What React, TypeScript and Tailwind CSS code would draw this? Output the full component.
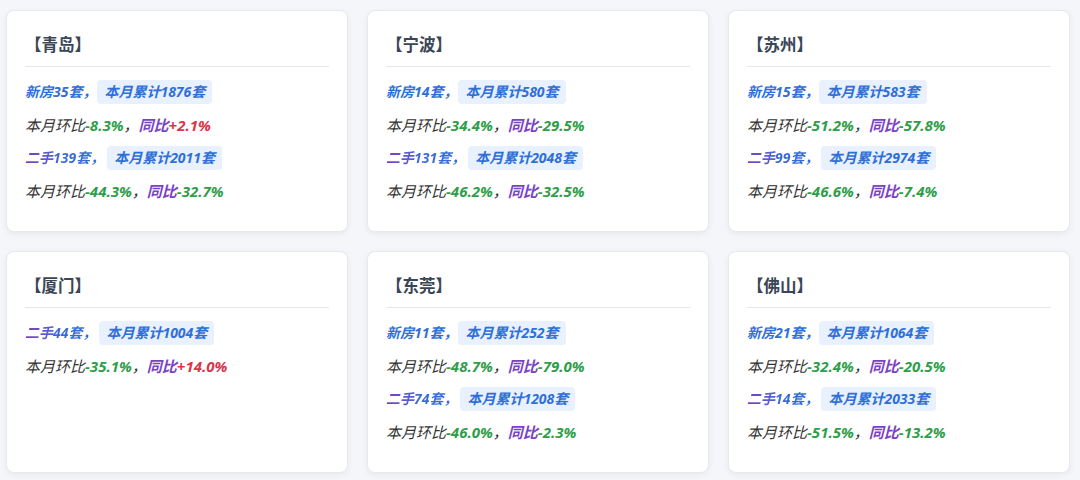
import React from 'react';

type Line = { kind: 'new' | 'second'; count: number; total: number; mom: string; yoy: string };
type City = { name: string; lines: Line[] };

const cities: City[] = [
  {
    name: '青岛',
    lines: [
      { kind: 'new', count: 35, total: 1876, mom: '-8.3%', yoy: '+2.1%' },
      { kind: 'second', count: 139, total: 2011, mom: '-44.3%', yoy: '-32.7%' },
    ],
  },
  {
    name: '宁波',
    lines: [
      { kind: 'new', count: 14, total: 580, mom: '-34.4%', yoy: '-29.5%' },
      { kind: 'second', count: 131, total: 2048, mom: '-46.2%', yoy: '-32.5%' },
    ],
  },
  {
    name: '苏州',
    lines: [
      { kind: 'new', count: 15, total: 583, mom: '-51.2%', yoy: '-57.8%' },
      { kind: 'second', count: 99, total: 2974, mom: '-46.6%', yoy: '-7.4%' },
    ],
  },
  {
    name: '厦门',
    lines: [{ kind: 'second', count: 44, total: 1004, mom: '-35.1%', yoy: '+14.0%' }],
  },
  {
    name: '东莞',
    lines: [
      { kind: 'new', count: 11, total: 252, mom: '-48.7%', yoy: '-79.0%' },
      { kind: 'second', count: 74, total: 1208, mom: '-46.0%', yoy: '-2.3%' },
    ],
  },
  {
    name: '佛山',
    lines: [
      { kind: 'new', count: 21, total: 1064, mom: '-32.4%', yoy: '-20.5%' },
      { kind: 'second', count: 14, total: 2033, mom: '-51.5%', yoy: '-13.2%' },
    ],
  },
];

function Pct({ v }: { v: string }) {
  const up = v.startsWith('+');
  return <span className={up ? 'font-bold text-[#d9364a]' : 'font-bold text-[#2f9e4a]'}>{v}</span>;
}

function Rows({ line }: { line: Line }) {
  return (
    <>
      <div className="flex h-6 items-center text-sm">
        {line.kind === 'new' ? (
          <span className="font-bold text-[#2f6fd8]">新房{line.count}套，</span>
        ) : (
          <span className="bg-gradient-to-r from-[#7b3bbf] via-[#3a6ad6] via-45% to-[#2f6fd8] bg-clip-text pr-[2px] font-bold text-transparent">
            二手{line.count}套，
          </span>
        )}
        <span className="ml-[1px] flex h-6 items-center rounded-[4px] bg-[#e8f1fd] px-[7px] font-bold text-[#2f6fd8]">
          本月累计{line.total}套
        </span>
      </div>
      <div className="flex h-6 items-center text-[15px] text-[#333]">
        <span>本月环比</span>
        <Pct v={line.mom} />
        <span>，</span>
        <span className="font-bold text-[#7a43c4]">同比</span>
        <Pct v={line.yoy} />
      </div>
    </>
  );
}

function CityCard({ city }: { city: City }) {
  return (
    <div className="rounded-lg border border-[#e6e9ee] bg-white px-[18px] pb-[28px] pt-[22px] shadow-[0_2px_6px_rgba(0,0,0,0.06)]">
      <div className="border-b border-[#e5e7eb] pb-[9px] text-[16.5px] font-bold leading-6 text-[#3a4656]">【{city.name}】</div>
      <div className="mt-[13px] flex flex-col gap-[9px] italic">
        {city.lines.map((l, i) => (
          <Rows key={i} line={l} />
        ))}
      </div>
    </div>
  );
}

export default function App() {
  return (
    <div
      className="h-[480px] w-[1080px] bg-[#f4f6f9] pl-[6px] pt-[10px]"
      style={{ fontFamily: '"Noto Sans", "Noto Sans CJK SC", sans-serif' }}
    >
      <div className="grid grid-cols-[342px_342px_342px] gap-[19px]">
        {cities.map((c) => (
          <CityCard key={c.name} city={c} />
        ))}
      </div>
    </div>
  );
}
